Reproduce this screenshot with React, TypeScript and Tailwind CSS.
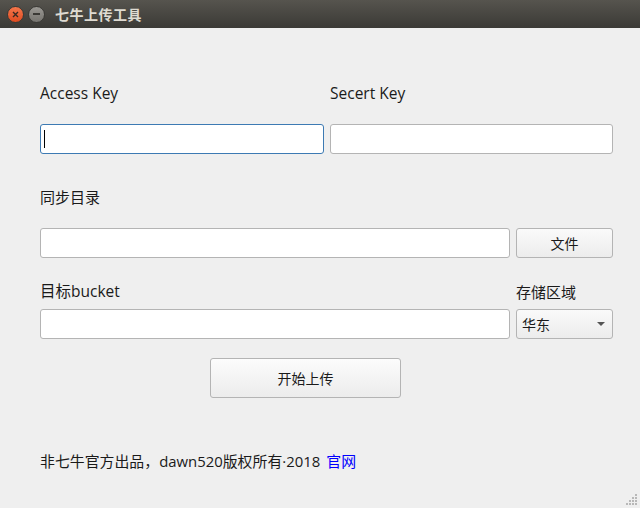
const font = { fontFamily: '"Open Sans", "Noto Sans CJK SC", sans-serif' };

function Field({ focused = false, className = '' }: { focused?: boolean; className?: string }) {
  return (
    <div
      className={`h-[30px] rounded-[3px] bg-white border flex items-center px-[3px] ${
        focused ? 'border-[#3d7ab3]' : 'border-[#b4b4b4]'
      } ${className}`}
    >
      {focused && <div className="w-px h-[18px] bg-black" />}
    </div>
  );
}

function Grip() {
  const dots = [
    [9, 0],
    [6, 3], [9, 3],
    [3, 6], [6, 6], [9, 6],
    [0, 9], [3, 9], [6, 9], [9, 9],
  ];
  return (
    <svg width="12" height="12" className="absolute right-[2px] bottom-[2px]">
      {dots.map(([x, y], i) => (
        <rect key={i} x={x} y={y} width="2" height="2" fill="#b8b8b8" />
      ))}
    </svg>
  );
}

export default function App() {
  return (
    <div className="w-[640px] h-[508px] bg-[#efefef] relative overflow-hidden text-[#1a1a1a]" style={font}>
      <div className="h-[28px] flex items-center bg-gradient-to-b from-[#56544e] to-[#3b3a36] px-[7px] gap-[4px]">
        <div className="w-[17px] h-[17px] rounded-full bg-gradient-to-b from-[#f5764a] to-[#df4b1f] border border-[#3a3935] flex items-center justify-center">
          <svg width="7" height="7" viewBox="0 0 7 7">
            <path d="M1 1L6 6M6 1L1 6" stroke="#3a2a22" strokeWidth="1.4" />
          </svg>
        </div>
        <div className="w-[17px] h-[17px] rounded-full bg-gradient-to-b from-[#9a9893] to-[#76746f] border border-[#3a3935] flex items-center justify-center">
          <div className="w-[7px] h-[1.5px] bg-[#3a3935]" />
        </div>
        <span className="ml-[6px] text-[14px] font-bold text-[#dfdbd2] tracking-[0.5px]">七牛上传工具</span>
      </div>

      <div className="pl-[40px] pr-[27px] flex flex-col">
        <div className="mt-[56px] flex gap-[6px] h-[20px] items-center text-[15.5px]">
          <span className="w-[284px]">Access Key</span>
          <span className="flex-1">Secert Key</span>
        </div>
        <div className="mt-[20px] flex gap-[6px]">
          <Field focused className="w-[284px]" />
          <Field className="flex-1" />
        </div>

        <div className="mt-[33px] h-[20px] flex items-center text-[15px]">同步目录</div>
        <div className="mt-[21px] flex gap-[6px]">
          <Field className="w-[470px]" />
          <button className="flex-1 h-[30px] rounded-[3px] border border-[#b4b4b4] bg-gradient-to-b from-[#fafafa] to-[#ececec] text-[14px]">
            文件
          </button>
        </div>

        <div className="mt-[24px] h-[20px] flex gap-[6px] items-center text-[15.5px]">
          <span className="w-[470px]">目标bucket</span>
          <span className="flex-1 text-[15px]">存储区域</span>
        </div>
        <div className="mt-[7px] flex gap-[6px]">
          <Field className="w-[470px]" />
          <div className="flex-1 h-[30px] rounded-[3px] border border-[#b4b4b4] bg-gradient-to-b from-[#fafafa] to-[#ececec] flex items-center justify-between pl-[5px] pr-[7px] text-[14px]">
            <span>华东</span>
            <svg width="8" height="4" viewBox="0 0 8 4">
              <path d="M0 0H8L4 4Z" fill="#555" />
            </svg>
          </div>
        </div>

        <button className="mt-[19px] ml-[170px] w-[191px] h-[40px] rounded-[3px] border border-[#b4b4b4] bg-gradient-to-b from-[#fcfcfc] to-[#ececec] text-[14px]">
          开始上传
        </button>

        <div className="mt-[53px] h-[20px] flex items-center text-[14.9px]">
          <span>非七牛官方出品，dawn520版权所有·2018</span>
          <span className="ml-[6px] text-[#0000ff]">官网</span>
        </div>
      </div>
      <Grip />
    </div>
  );
}
